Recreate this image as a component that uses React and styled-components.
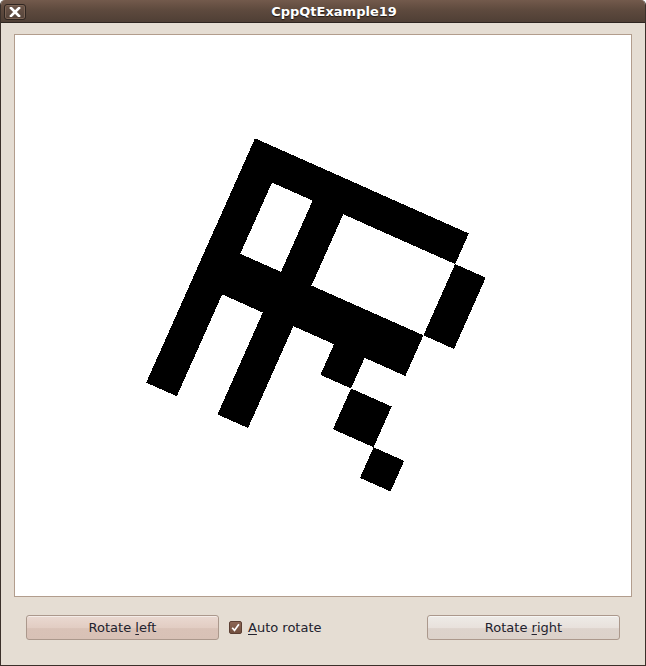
import React from "react"
import styled, { createGlobalStyle } from "styled-components"

const GlobalStyle = createGlobalStyle`
  html, body {
    margin: 0;
    padding: 0;
    background: #ffffff;
  }
`

const Window = styled.div`
  width: 646px;
  height: 666px;
  box-sizing: border-box;
  display: flex;
  flex-direction: column;
  background: #e5ddd3;
  border: 1px solid #3b302a;
  border-top: none;
  border-radius: 5px 5px 0 0;
  overflow: hidden;
  font-family: "DejaVu Sans", "Liberation Sans", sans-serif;
`

const TitleBar = styled.div`
  height: 22px;
  flex: none;
  display: flex;
  align-items: center;
  background: linear-gradient(#735a4c 0%, #5e4a3e 45%, #4f3f35 100%);
  border-bottom: 1px solid #2e2520;
  margin: 0 -1px;
`

const CloseButton = styled.div`
  flex: none;
  margin-left: 4px;
  margin-top: 1px;
  width: 22px;
  height: 16px;
  box-sizing: border-box;
  border: 1px solid #2f2621;
  border-radius: 3px;
  background: linear-gradient(#6d5649, #54433a);
  box-shadow: inset 0 0 0 1px #7c6455;
  display: flex;
  align-items: center;
  justify-content: center;
`

const Title = styled.div`
  flex: 1;
  text-align: center;
  padding-right: 4px;
  color: #ffffff;
  font-weight: bold;
  font-size: 13px;
  text-shadow: 0 1px 1px #1e1612;
`

const Content = styled.div`
  flex: 1;
  display: flex;
  flex-direction: column;
  padding: 11px 13px 0 13px;
`

const Canvas = styled.div`
  height: 563px;
  box-sizing: border-box;
  border: 1px solid #b29d8d;
  background: #ffffff;
  overflow: hidden;
`

const ButtonRow = styled.div`
  display: flex;
  align-items: center;
  margin-top: 18px;
  padding: 0 12px 0 12px;
`

const PushButton = styled.div`
  width: 193px;
  height: 25px;
  box-sizing: border-box;
  border: 1px solid #ab988c;
  border-radius: 3px;
  background: ${p =>
    p.$active
      ? "linear-gradient(#ead9d1 0%, #e2cdc3 50%, #d9c2b7 55%, #d8c1b6 100%)"
      : "linear-gradient(#eeebe7 0%, #e8e1dc 50%, #ddd3cc 55%, #dcd2ca 100%)"};
  box-shadow: inset 0 1px 0 rgba(255, 255, 255, 0.5);
  display: flex;
  align-items: center;
  justify-content: center;
  font-size: 13px;
  color: #22222e;
`

const Mnemonic = styled.span`
  text-decoration: underline;
  text-underline-offset: 2px;
`

const CheckLabel = styled.label`
  display: flex;
  align-items: center;
  gap: 6px;
  margin-left: 10px;
  font-size: 13px;
  color: #22222e;
`

const CheckBox = styled.span`
  width: 13px;
  height: 13px;
  box-sizing: border-box;
  border-radius: 2px;
  border: 1px solid #5c3f33;
  background: linear-gradient(#8c6655, #73503f);
  display: flex;
  align-items: center;
  justify-content: center;
`

const Spacer = styled.div`
  flex: 1;
`

// grid lines of the pixel glyph, in the rotated frame
const lines = [0, 33.5, 78, 111.5, 156, 189.5, 234, 267.5]

// [col, row, colSpan, rowSpan]
const cells = [
  [0, 0, 6, 1],
  [0, 0, 1, 7],
  [2, 0, 1, 7],
  [6, 1, 1, 2],
  [0, 3, 6, 1],
  [4, 4, 1, 1],
  [5, 5, 1, 1],
  [6, 6, 1, 1],
]

const PixelGlyph = () => (
  <svg width="616" height="561" style={{ display: "block" }}>
    <g transform="translate(240 103.3) rotate(24)" shapeRendering="crispEdges">
      {cells.map(([c, r, w, h], i) => (
        <rect
          key={i}
          x={lines[c]}
          y={lines[r]}
          width={lines[c + w] - lines[c]}
          height={lines[r + h] - lines[r]}
          fill="#000"
        />
      ))}
    </g>
  </svg>
)

const App = () => {
  return (
    <>
      <GlobalStyle />
      <Window>
        <TitleBar>
          <CloseButton>
            <svg width="12" height="10" viewBox="0 0 12 10">
              <path d="M2 1 L10 9 M10 1 L2 9" stroke="#fff" strokeWidth="2.6" strokeLinecap="square" />
            </svg>
          </CloseButton>
          <Title>CppQtExample19</Title>
        </TitleBar>
        <Content>
          <Canvas>
            <PixelGlyph />
          </Canvas>
          <ButtonRow>
            <PushButton $active>
              <span>Rotate <Mnemonic>l</Mnemonic>eft</span>
            </PushButton>
            <CheckLabel>
              <CheckBox>
                <svg width="9" height="9" viewBox="0 0 9 9">
                  <path d="M1.2 4.8 L3.5 7.4 L7.9 1.2" stroke="#fff" strokeWidth="1.7" fill="none" />
                </svg>
              </CheckBox>
              <span><Mnemonic>A</Mnemonic>uto rotate</span>
            </CheckLabel>
            <Spacer />
            <PushButton>
              <span>Rotate <Mnemonic>r</Mnemonic>ight</span>
            </PushButton>
          </ButtonRow>
        </Content>
      </Window>
    </>
  )
}

export default App
